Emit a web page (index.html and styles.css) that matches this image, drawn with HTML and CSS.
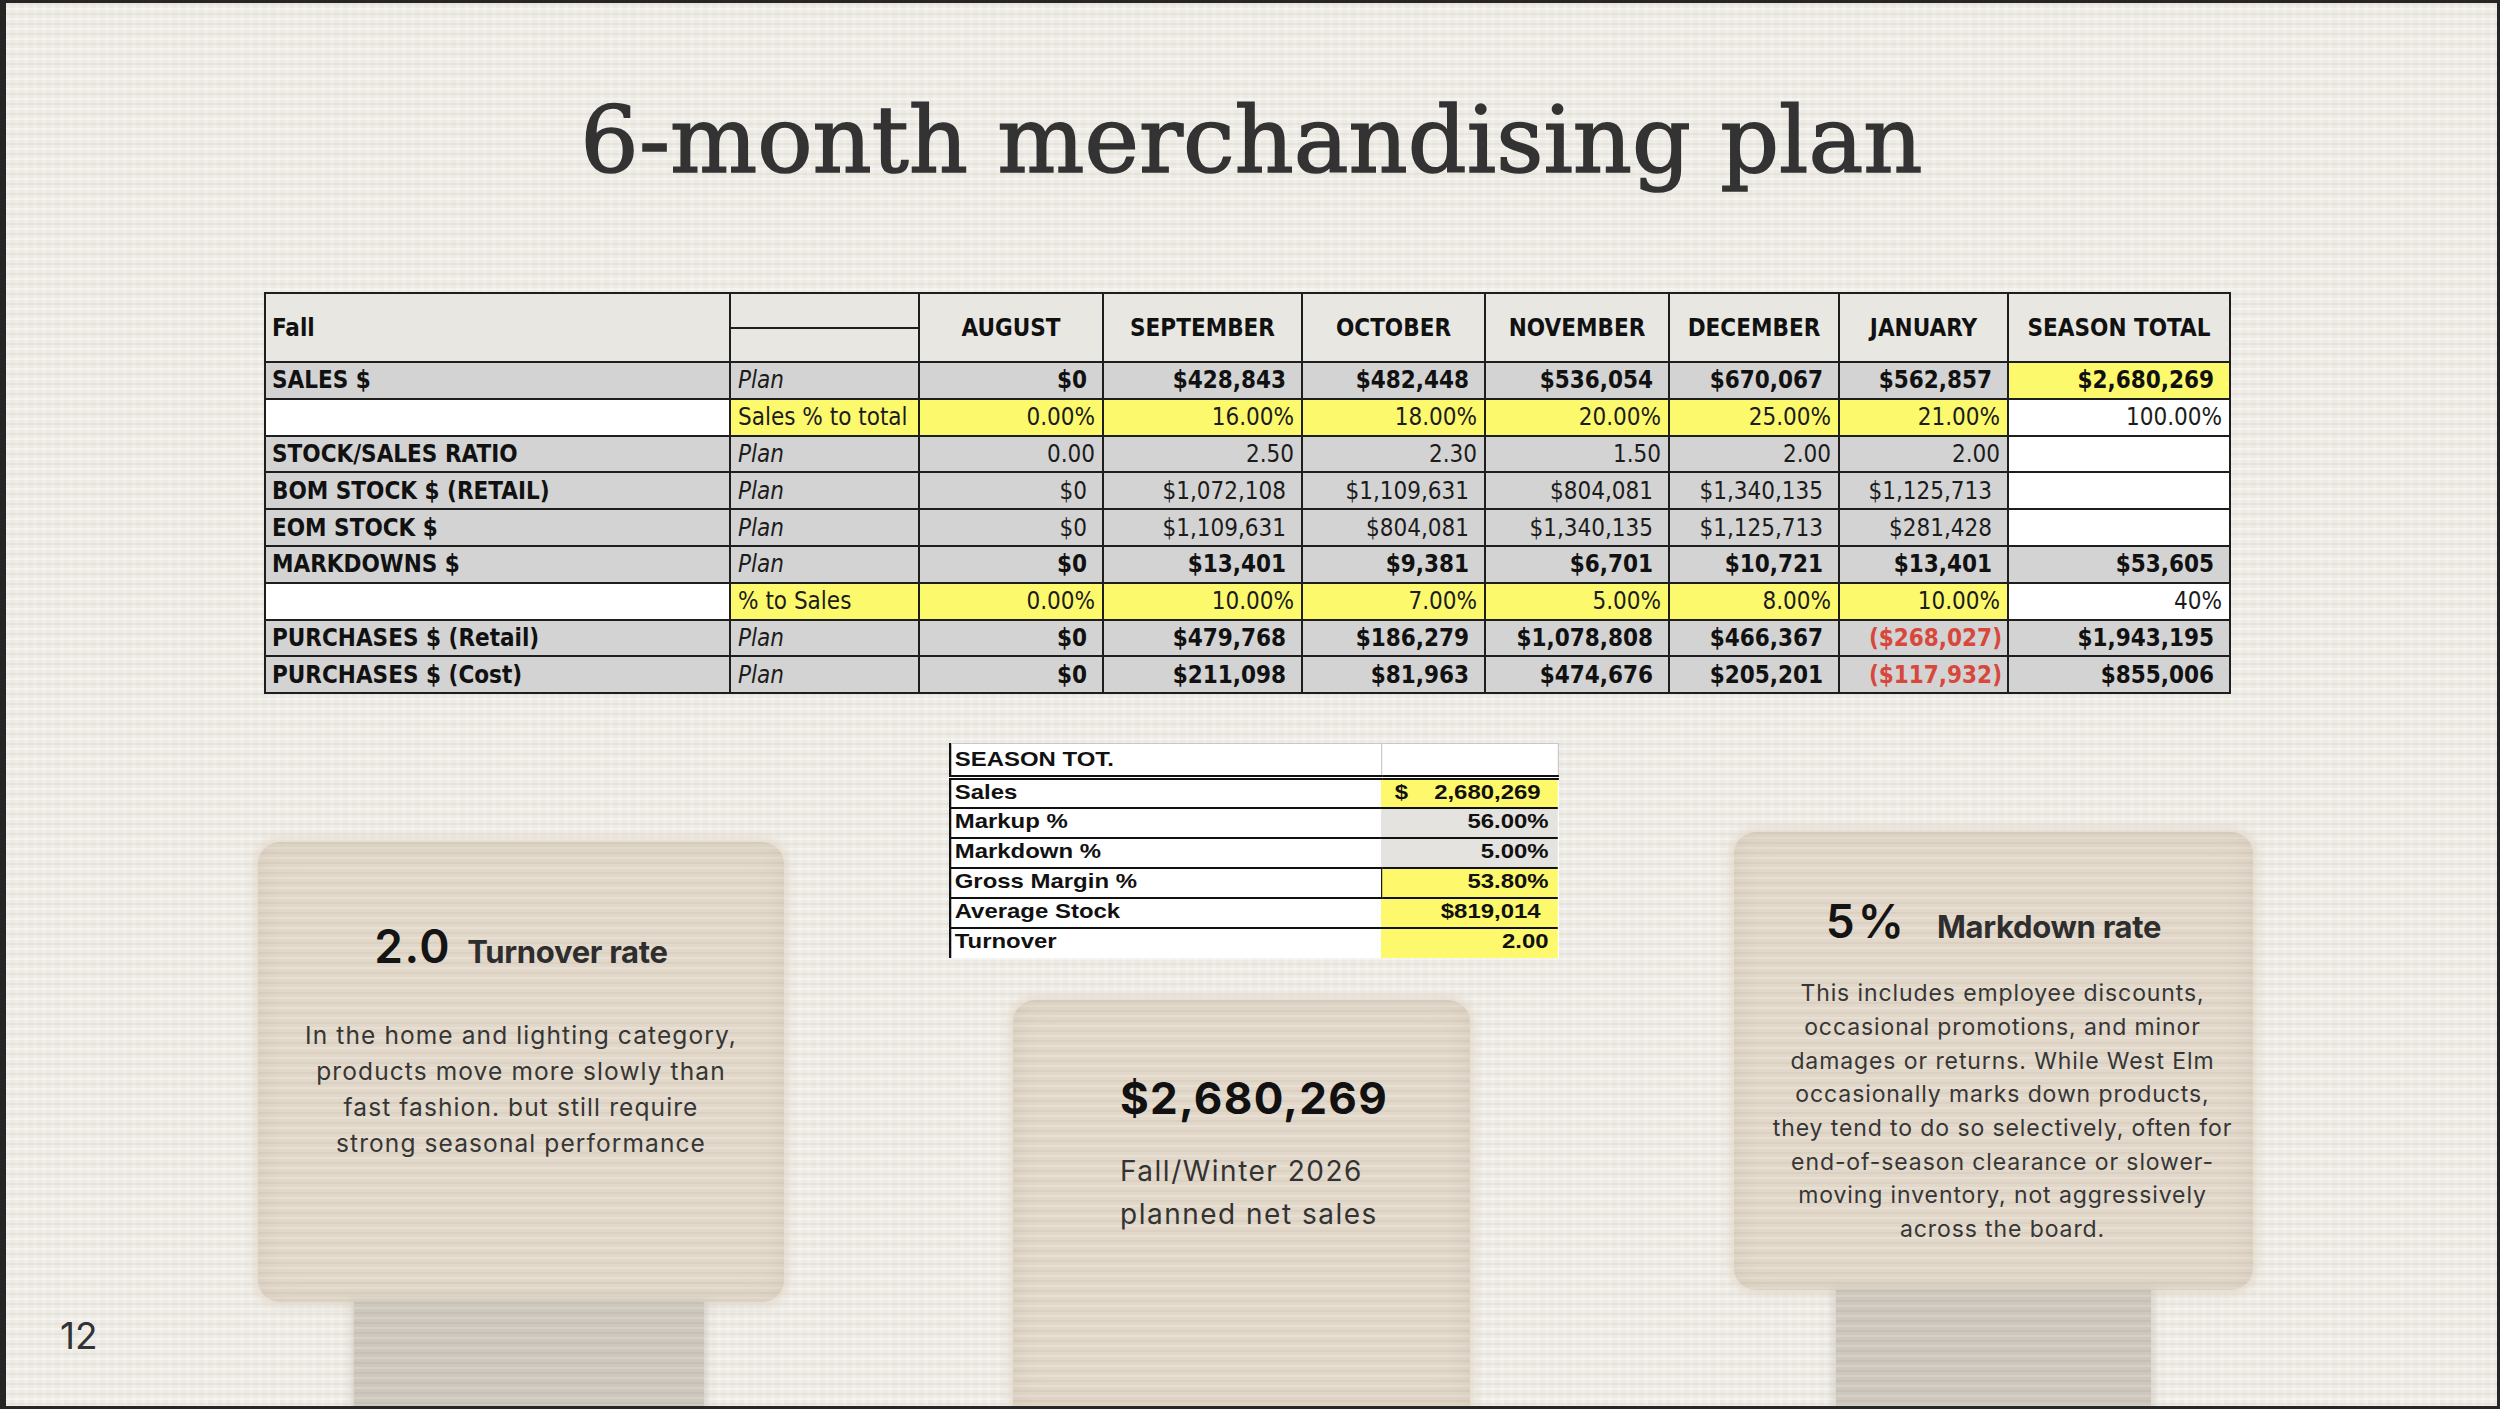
FILE: index.html
```html
<!DOCTYPE html>
<html lang="en">
<head>
<meta charset="utf-8">
<title>6-month merchandising plan</title>
<link rel="stylesheet" href="styles.css">
</head>
<body>
<div class="slide">
  <h1 class="title">6-month merchandising plan</h1>

  <table class="plan">
    <colgroup>
      <col class="c-lbl"><col class="c-pl"><col class="c-aug"><col class="c-sep"><col class="c-oct"><col class="c-nov"><col class="c-dec"><col class="c-jan"><col class="c-tot">
    </colgroup>
    <thead>
      <tr>
        <th rowspan="2" class="fall">Fall</th>
        <th class="sub"></th>
        <th rowspan="2">AUGUST</th>
        <th rowspan="2">SEPTEMBER</th>
        <th rowspan="2">OCTOBER</th>
        <th rowspan="2">NOVEMBER</th>
        <th rowspan="2">DECEMBER</th>
        <th rowspan="2">JANUARY</th>
        <th rowspan="2">SEASON TOTAL</th>
      </tr>
      <tr><th class="sub"></th></tr>
    </thead>
    <tbody>
      <tr>
        <td class="lbl">SALES $</td><td class="pl">Plan</td>
        <td class="b cur">$0</td><td class="b cur">$428,843</td><td class="b cur">$482,448</td><td class="b cur">$536,054</td><td class="b cur">$670,067</td><td class="b cur">$562,857</td><td class="b cur y">$2,680,269</td>
      </tr>
      <tr>
        <td class="lbl w"></td><td class="txt y">Sales % to total</td>
        <td class="y">0.00%</td><td class="y">16.00%</td><td class="y">18.00%</td><td class="y">20.00%</td><td class="y">25.00%</td><td class="y">21.00%</td><td class="w">100.00%</td>
      </tr>
      <tr>
        <td class="lbl">STOCK/SALES RATIO</td><td class="pl">Plan</td>
        <td>0.00</td><td>2.50</td><td>2.30</td><td>1.50</td><td>2.00</td><td>2.00</td><td class="w"></td>
      </tr>
      <tr>
        <td class="lbl">BOM STOCK $ (RETAIL)</td><td class="pl">Plan</td>
        <td class="cur">$0</td><td class="cur">$1,072,108</td><td class="cur">$1,109,631</td><td class="cur">$804,081</td><td class="cur">$1,340,135</td><td class="cur">$1,125,713</td><td class="w"></td>
      </tr>
      <tr>
        <td class="lbl">EOM STOCK $</td><td class="pl">Plan</td>
        <td class="cur">$0</td><td class="cur">$1,109,631</td><td class="cur">$804,081</td><td class="cur">$1,340,135</td><td class="cur">$1,125,713</td><td class="cur">$281,428</td><td class="w"></td>
      </tr>
      <tr>
        <td class="lbl">MARKDOWNS $</td><td class="pl">Plan</td>
        <td class="b cur">$0</td><td class="b cur">$13,401</td><td class="b cur">$9,381</td><td class="b cur">$6,701</td><td class="b cur">$10,721</td><td class="b cur">$13,401</td><td class="b cur">$53,605</td>
      </tr>
      <tr>
        <td class="lbl w"></td><td class="txt y">% to Sales</td>
        <td class="y">0.00%</td><td class="y">10.00%</td><td class="y">7.00%</td><td class="y">5.00%</td><td class="y">8.00%</td><td class="y">10.00%</td><td class="w">40%</td>
      </tr>
      <tr>
        <td class="lbl">PURCHASES $ (Retail)</td><td class="pl">Plan</td>
        <td class="b cur">$0</td><td class="b cur">$479,768</td><td class="b cur">$186,279</td><td class="b cur">$1,078,808</td><td class="b cur">$466,367</td><td class="b neg">($268,027)</td><td class="b cur">$1,943,195</td>
      </tr>
      <tr>
        <td class="lbl">PURCHASES $ (Cost)</td><td class="pl">Plan</td>
        <td class="b cur">$0</td><td class="b cur">$211,098</td><td class="b cur">$81,963</td><td class="b cur">$474,676</td><td class="b cur">$205,201</td><td class="b neg">($117,932)</td><td class="b cur">$855,006</td>
      </tr>
    </tbody>
  </table>

  <div class="lower">
    <div class="pnum-col"><span class="pnum">12</span></div>

    <div class="col col-left">
      <div class="card card-left">
        <div class="headline"><span class="fig">2.0</span><span class="lab">Turnover rate</span></div>
        <p class="body body-left">In the home and lighting category,<br>products move more slowly than<br>fast fashion. but still require<br>strong seasonal performance</p>
      </div>
      <div class="stem stem-left"></div>
    </div>

    <div class="col col-mid">
      <table class="tot">
        <colgroup><col class="t-a"><col class="t-b"></colgroup>
        <tr class="hd"><td>SEASON TOT.</td><td></td></tr>
        <tr><td>Sales</td><td class="v y cur"><span class="ds">$</span>2,680,269</td></tr>
        <tr><td>Markup %</td><td class="v lg">56.00%</td></tr>
        <tr><td>Markdown %</td><td class="v lg">5.00%</td></tr>
        <tr><td class="gm">Gross Margin %</td><td class="v y">53.80%</td></tr>
        <tr><td>Average Stock</td><td class="v y cur">$819,014</td></tr>
        <tr><td>Turnover</td><td class="v y">2.00</td></tr>
      </table>
      <div class="card card-mid">
        <div class="big2">$2,680,269</div>
        <div class="sub2">Fall/Winter 2026<br>planned net sales</div>
      </div>
    </div>

    <div class="col col-right">
      <div class="card card-right">
        <div class="headline hl-right"><span class="fig">5%</span><span class="lab">Markdown rate</span></div>
        <p class="body body-right">This includes employee discounts,<br>occasional promotions, and minor<br>damages or returns. While West Elm<br>occasionally marks down products,<br>they tend to do so selectively, often for<br>end-of-season clearance or slower-<br>moving inventory, not aggressively<br>across the board.</p>
      </div>
      <div class="stem stem-right"></div>
    </div>
  </div>
</div>
</body>
</html>
```

FILE: styles.css
```css
* { box-sizing: border-box; }
html, body { margin: 0; padding: 0; }
body { width: 2500px; height: 1409px; overflow: hidden; background: #ece9e3; }

.slide {
  width: 2500px;
  height: 1409px;
  border: 3px solid #262626;
  border-left-width: 6px;
  background-color: #edeae4;
  background-image:
    repeating-linear-gradient(180deg, rgba(150,132,105,0.08) 0 2px, rgba(255,255,255,0) 2px 5px, rgba(255,255,255,0.40) 5px 7px, rgba(255,255,255,0) 7px 10px),
    repeating-linear-gradient(90deg, rgba(255,255,255,0.18) 0 4px, rgba(255,255,255,0) 4px 9px);
  display: flex;
  flex-direction: column;
  overflow: hidden;
  font-family: Inter, "Noto Sans", sans-serif;
  color: #333;
}

.title {
  margin: 83px 0 0;
  text-align: center;
  font-family: "DejaVu Serif", serif;
  font-weight: normal;
  font-size: 92px;
  line-height: 110px;
  color: #333;
  -webkit-text-stroke: 1.6px #333;
}

/* ---------- main plan table ---------- */
.plan {
  border-collapse: collapse;
  table-layout: fixed;
  width: 1965px;
  margin: 96px 0 0 258px;
  font-family: "DejaVu Sans Condensed", "DejaVu Sans", sans-serif;
  font-stretch: condensed;
  font-size: 24px;
  color: #1c1c1c;
  flex: none;
}
.c-lbl { width: 465px; }
.c-pl { width: 189px; }
.c-aug { width: 184px; }
.c-sep { width: 199px; }
.c-oct { width: 183px; }
.c-nov { width: 184px; }
.c-dec { width: 170px; }
.c-jan { width: 169px; }
.c-tot { width: 222px; }

.plan th, .plan td {
  border: 2px solid #1e1e1e;
  padding: 0 7px;
  white-space: nowrap;
  overflow: hidden;
  vertical-align: middle;
}
.plan thead tr { height: 34.5px; }
.plan thead th {
  background: #e8e7e2;
  font-weight: bold;
  text-align: center;
  color: #111;
}
.plan thead th.fall { text-align: left; padding-left: 6px; }

.plan tbody tr { height: 36.8px; }
.plan tbody td {
  background: #d3d3d3;
  text-align: right;
  font-weight: normal;
}
.plan tbody td.lbl { text-align: left; font-weight: bold; padding-left: 6px; color: #111; }
.plan tbody td.pl { text-align: left; font-style: italic; }
.plan tbody td.txt { text-align: left; }
.plan tbody td.b { font-weight: bold; color: #111; }
.plan tbody td.cur { padding-right: 15px; }
.plan tbody td.neg { color: #d8473b; padding-right: 5px; }
.plan tbody td.y { background: #fdf96d; }
.plan tbody td.w { background: #ffffff; }

/* ---------- lower area ---------- */
.lower {
  flex: 1;
  min-height: 0;
  display: flex;
  align-items: stretch;
}
.pnum-col {
  width: 252px;
  flex: none;
  display: flex;
  align-items: flex-end;
  padding: 0 0 48px 54px;
}
.pnum {
  font-size: 37px;
  line-height: 45px;
  color: #333;
}
.col {
  flex: none;
  display: flex;
  flex-direction: column;
}
.col-left { width: 526px; padding-top: 148px; }
.col-mid { width: 608px; margin-left: 165px; padding-top: 49px; align-items: flex-start; }
.col-right { width: 519px; margin-left: 177px; padding-top: 138px; }

.card {
  background-color: #e2d8ca;
  background-image:
    repeating-linear-gradient(180deg, rgba(140,118,86,0.08) 0 2px, rgba(255,255,255,0) 2px 5px, rgba(255,255,255,0.18) 5px 7px, rgba(255,255,255,0) 7px 10px);
  border-radius: 22px;
  box-shadow: 0 0 10px 4px rgba(226,216,202,0.85), inset 0 0 26px rgba(150,128,98,0.14);
  flex: none;
}
.stem {
  flex: 1;
  align-self: center;
  background-color: #cdc7be;
  background-image:
    repeating-linear-gradient(180deg, rgba(120,108,90,0.08) 0 2px, rgba(255,255,255,0) 2px 5px, rgba(255,255,255,0.16) 5px 7px, rgba(255,255,255,0) 7px 10px);
  box-shadow: 0 0 8px 3px rgba(205,199,190,0.7);
}
.card-left { height: 460px; padding-top: 76px; }
.stem-left { width: 350px; margin-left: 16px; }
.card-right { height: 458px; padding-top: 61px; }
.stem-right { width: 315px; }

.headline {
  display: flex;
  justify-content: center;
  align-items: baseline;
  gap: 16px;
  line-height: 56px;
}
.hl-right { gap: 30px; }
.fig {
  font-size: 46px;
  font-weight: 600;
  color: #141414;
  letter-spacing: 1.5px;
}
.hl-right .fig { letter-spacing: 3px; }
.lab {
  font-size: 31px;
  font-weight: 700;
  color: #2e2e2e;
  letter-spacing: -0.3px;
}
.body {
  margin: 0;
  text-align: center;
  color: #363636;
  white-space: nowrap;
}
.body-left { margin-top: 37px; font-size: 24.5px; line-height: 36px; letter-spacing: 1.1px; }
.body-right { margin-top: 22px; padding-left: 18px; font-size: 23px; line-height: 33.7px; letter-spacing: 0.9px; }

/* ---------- season total table ---------- */
.tot {
  border-collapse: collapse;
  table-layout: fixed;
  width: 533px;
  transform: scaleX(1.14);
  transform-origin: 0 0;
  font-family: "Liberation Sans", Arial, sans-serif;
  font-weight: bold;
  font-size: 21px;
  color: #111;
  background: #ffffff;
  border-left: 2.5px solid #111;
  flex: none;
}
.t-a { width: 378px; }
.t-b { width: 155px; }
.tot td {
  height: 30px;
  padding: 0 3px;
  vertical-align: top;
  line-height: 24px;
  border-bottom: 2px solid #111;
  white-space: nowrap;
}
.tot tr.hd td {
  height: 34px;
  border-top: 1px solid #c8c8c8;
  border-bottom: 5px double #111;
  padding-top: 3px;
}
.tot tr.hd td + td {
  border-left: 1px solid #c8c8c8;
  border-right: 1px solid #c8c8c8;
}
.tot td.v { text-align: right; padding-right: 8px; }
.tot td.cur { padding-right: 15px; }
.tot td.y { background: #fdf86c; }
.tot td.lg { background: #e4e3df; }
.tot td.gm { border-right: 1.5px solid #111; }
.tot tr:last-child td { border-bottom: none; }
.ds { float: left; padding-left: 9px; }

.card-mid {
  width: 457px;
  flex: 1;
  margin: 42px 0 0 64px;
  padding: 71px 0 0 107px;
  border-bottom-left-radius: 0;
  border-bottom-right-radius: 0;
}
.big2 {
  font-size: 44px;
  line-height: 54px;
  font-weight: 700;
  color: #111;
  letter-spacing: 1.3px;
}
.sub2 {
  margin-top: 25px;
  font-size: 28px;
  line-height: 43px;
  color: #333;
  letter-spacing: 1.5px;
  white-space: nowrap;
}
```
